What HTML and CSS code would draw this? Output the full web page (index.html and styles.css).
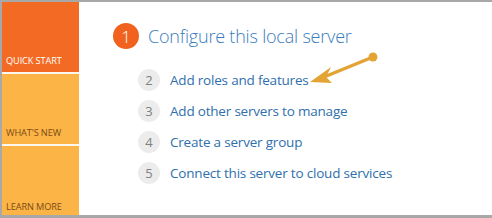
FILE: index.html
```html
<!DOCTYPE html>
<html>
<head>
<meta charset="utf-8">
<link rel="stylesheet" href="styles.css">
</head>
<body>
<div class="frame">
  <nav class="side">
    <div class="tile tile-orange"><span>QUICK START</span></div>
    <div class="tile tile-yellow"><span>WHAT'S NEW</span></div>
    <div class="tile tile-yellow last"><span>LEARN MORE</span></div>
  </nav>
  <main class="content">
    <div class="title-row">
      <span class="num-big">1</span>
      <span class="title">Configure this local server</span>
    </div>
    <ul class="steps">
      <li><span class="num">2</span><span class="link">Add roles and features</span></li>
      <li><span class="num">3</span><span class="link">Add other servers to manage</span></li>
      <li><span class="num">4</span><span class="link">Create a server group</span></li>
      <li><span class="num">5</span><span class="link">Connect this server to cloud services</span></li>
    </ul>
    <svg class="arrow" width="80" height="40" viewBox="0 0 80 40">
      <line x1="67" y1="11" x2="18" y2="31" stroke="#e3a435" stroke-width="3.5" stroke-linecap="round"/>
      <circle cx="67" cy="11" r="4.5" fill="#e3a435"/>
      <polygon points="4,36 25,21 20,31 26,37" fill="#e3a435"/>
    </svg>
  </main>
</div>
</body>
</html>
```
FILE: styles.css
```css
html, body {
  margin: 0;
  padding: 0;
  background: #ffffff;
}
.frame {
  width: 490px;
  height: 213px;
  border-top: 2px solid #a8a8a8;
  border-left: 2px solid #a8a8a8;
  border-bottom: 3px solid #a8a8a8;
  display: flex;
  font-family: "Open Sans", "Noto Sans", sans-serif;
  position: relative;
}
.side {
  width: 77px;
  display: flex;
  flex-direction: column;
  gap: 2px;
  background: #fbf6ee;
}
.tile {
  height: 70px;
  display: flex;
  align-items: flex-end;
  padding: 0 0 5px 4px;
  box-sizing: border-box;
  font-size: 9.2px;
  letter-spacing: -0.1px;
}
.tile.last {
  height: 69px;
  padding-bottom: 2px;
}
.tile-orange {
  background: #f26a24;
  color: #ffffff;
}
.tile-yellow {
  background: #fdb446;
  color: #7a4b16;
}
.content {
  flex: 1;
  position: relative;
  padding: 21px 0 0 34px;
}
.title-row {
  display: flex;
  align-items: center;
  gap: 9px;
}
.num-big {
  width: 26px;
  height: 26px;
  border-radius: 50%;
  background: #f0621d;
  color: #ffffff;
  font-size: 17px;
  font-weight: 300;
  display: flex;
  align-items: center;
  justify-content: center;
}
.title {
  font-size: 18px;
  font-weight: 300;
  color: #3b7cbd;
  letter-spacing: -0.2px;
}
.steps {
  list-style: none;
  margin: 20px 0 0 0;
  padding: 0 0 0 25px;
  display: flex;
  flex-direction: column;
  gap: 9px;
}
.steps li {
  display: flex;
  align-items: center;
  gap: 10px;
  height: 22px;
}
.num {
  width: 22px;
  height: 22px;
  border-radius: 50%;
  background: #ececec;
  color: #808080;
  font-size: 13px;
  display: flex;
  align-items: center;
  justify-content: center;
}
.link {
  font-size: 13.5px;
  color: #2f6fac;
  letter-spacing: -0.2px;
}
.arrow {
  position: absolute;
  left: 227px;
  top: 44px;
}
```
